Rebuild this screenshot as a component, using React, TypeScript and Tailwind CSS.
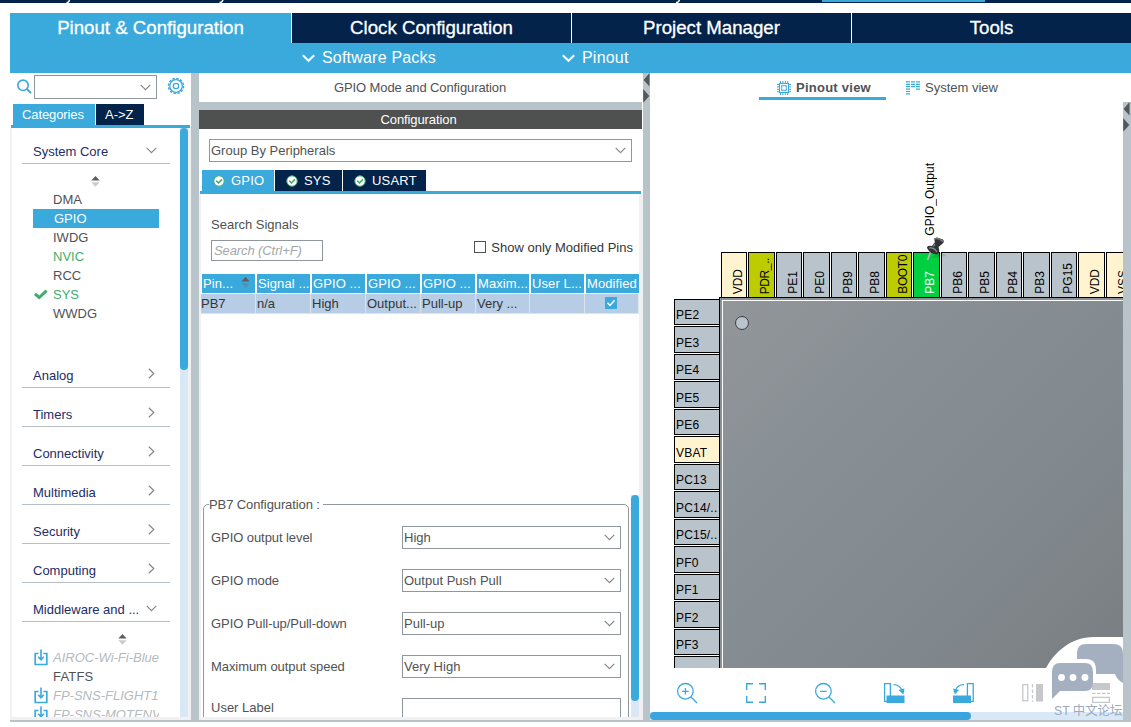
import type { ReactNode } from "react";
import clsx from "clsx";

const mainTabs = ["Clock Configuration", "Project Manager", "Tools"];

const coreItems = [
  { name: "DMA" },
  { name: "GPIO", selected: true },
  { name: "IWDG" },
  { name: "NVIC", green: true },
  { name: "RCC" },
  { name: "SYS", green: true, checked: true },
  { name: "WWDG" },
];

const closedGroups = ["Analog", "Timers", "Connectivity", "Multimedia", "Security", "Computing"];

const middleware = [
  { name: "AIROC-Wi-Fi-Blue", pack: true },
  { name: "FATFS", pack: false },
  { name: "FP-SNS-FLIGHT1", pack: true },
  { name: "FP-SNS-MOTENV", pack: true },
];

const columns = [
  { head: "Pin...", value: "PB7", sort: true },
  { head: "Signal ...", value: "n/a" },
  { head: "GPIO ...", value: "High" },
  { head: "GPIO ...", value: "Output..." },
  { head: "GPIO ...", value: "Pull-up" },
  { head: "Maxim...", value: "Very ..." },
  { head: "User L...", value: "" },
  { head: "Modified", value: "check" },
];

const settings = [
  { label: "GPIO output level", value: "High" },
  { label: "GPIO mode", value: "Output Push Pull" },
  { label: "GPIO Pull-up/Pull-down", value: "Pull-up" },
  { label: "Maximum output speed", value: "Very High" },
];

const topPins = [
  "VDD", "PDR_..", "PE1", "PE0", "PB9", "PB8", "BOOT0", "PB7",
  "PB6", "PB5", "PB4", "PB3", "PG15", "VDD", "VSS",
];

const leftPins = [
  "PE2", "PE3", "PE4", "PE5", "PE6", "VBAT", "PC13", "PC14/..",
  "PC15/..", "PF0", "PF1", "PF2", "PF3", "",
];

const pinColor = (name: string) => {
  if (name === "PB7") return "bg-[#00d040] text-white";
  if (["VDD", "VSS", "VBAT"].includes(name)) return "bg-[#fff4cf] text-black";
  if (name.startsWith("PDR") || name === "BOOT0") return "bg-[#bccc00] text-black";
  return "bg-[#b8c3cb] text-black";
};

function Chevron({ className }: { className?: string }) {
  return (
    <svg width="11" height="7" viewBox="0 0 11 7" fill="none" className={clsx("shrink-0", className)}>
      <path d="M0.7 0.8 L5.5 5.6 L10.3 0.8" stroke="#85888b" strokeWidth="1.2" />
    </svg>
  );
}

function SortArrows({ className, dim = "#c9cbcd" }: { className?: string; dim?: string }) {
  return (
    <svg width="9" height="11" viewBox="0 0 9 11" className={clsx("shrink-0", className)}>
      <path d="M4.5 0 L8.7 4.6 H0.3 Z" fill="#5c5f61" />
      <path d="M0.3 6.2 H8.7 L4.5 10.8 Z" fill={dim} />
    </svg>
  );
}

function PackIcon() {
  return (
    <svg width="14" height="17" viewBox="0 0 14 17" fill="none" stroke="#3aa9dc" className="shrink-0">
      <path d="M4.5 4.5 H1.2 V15.5 H12.8 V4.5 H9.5" strokeWidth="1.7" />
      <path d="M7 0.5 V10 M4.2 7.8 L7 10.8 L9.8 7.8" strokeWidth="1.6" />
    </svg>
  );
}

function GroupHeader({ label, open }: { label: string; open?: boolean }) {
  return (
    <div className="flex h-[39px] w-[148px] shrink-0 items-start justify-between border-b border-[#b4bfc6] pl-[11px] text-[#222d66]">
      <span className="mt-[18px] leading-[18px]">{label}</span>
      {open ? (
        <Chevron className="mr-[13px] mt-[22px]" />
      ) : (
        <svg width="7" height="11" viewBox="0 0 7 11" fill="none" className="mr-[15px] mt-[19px]">
          <path d="M0.8 0.7 L5.8 5.5 L0.8 10.3" stroke="#85888b" strokeWidth="1.2" />
        </svg>
      )}
    </div>
  );
}

function Select({ value, className }: { value: string; className?: string }) {
  return (
    <div className={clsx("flex h-[23px] items-center justify-between border border-[#8f969c] bg-white pl-px pr-[5px]", className)}>
      <span>{value}</span>
      <Chevron />
    </div>
  );
}

function PeripheralTab({ label, active, className }: { label: string; active?: boolean; className: string }) {
  return (
    <div className={clsx("flex h-[21px] items-center pl-[11px] tracking-[0.2px] text-white", active ? "bg-[#3aa9dc]" : "bg-[#03234b]", className)}>
      <svg width="12" height="12" viewBox="0 0 12 12" fill="none" className="mr-[6px]">
        <circle cx="6" cy="6" r="5.2" fill="#fff" stroke="#4cb073" strokeWidth="1" />
        <path d="M3.2 5.8 L5.4 8 L9 4.4" stroke="#3fa868" strokeWidth="1.5" />
      </svg>
      {label}
    </div>
  );
}

function Splitter({ className }: { className: string }) {
  return (
    <div className={clsx("shrink-0 bg-[#b9c3ca]", className)}>
      <svg width="8" height="30" viewBox="0 0 8 30">
        <path d="M6.5 0 V13.5 L0.6 7 Z M0.2 16 L6.3 23 L0.2 29.8 Z" fill="#55585a" />
      </svg>
    </div>
  );
}

function ToolIcon({ children, className }: { children: ReactNode; className?: string }) {
  return (
    <svg width="22" height="22" viewBox="0 0 22 22" fill="none" stroke="#3aa9dc" strokeWidth="1.3" className={clsx("shrink-0", className)}>
      {children}
    </svg>
  );
}

function Sidebar() {
  return (
    <aside className="flex w-[181px] shrink-0 flex-col">
      <div className="flex h-[31px] items-start">
        <svg width="16" height="16" viewBox="0 0 16 16" fill="none" stroke="#3aa9dc" strokeWidth="1.6" className="ml-[6px] mt-[5px]">
          <circle cx="7" cy="7.3" r="5.2" />
          <path d="M10.8 11 L15 15" strokeWidth="1.8" />
        </svg>
        <div className="ml-[2px] mt-[2px] flex h-[24px] w-[123px] items-center justify-end border border-[#8f969c] pr-[5px]">
          <Chevron />
        </div>
        <svg width="18" height="18" viewBox="0 0 18 18" fill="none" stroke="#3aa9dc" className="ml-[10px] mt-[4px]">
          <circle cx="9" cy="9" r="6.3" strokeWidth="1.3" />
          <circle cx="9" cy="9" r="7.5" strokeWidth="1.5" strokeDasharray="2.4 1.527" />
          <circle cx="9" cy="9" r="2.7" strokeWidth="1.3" />
        </svg>
      </div>
      <div className="ml-px flex h-[24px] w-[179px] gap-px border-b-[3px] border-[#3aa9dc] pl-[2px] text-white">
        <div className="w-[82px] bg-[#3aa9dc] pl-[9px] leading-[21px] tracking-[-0.1px]">Categories</div>
        <div className="w-[48px] bg-[#03234b] pl-[9px] leading-[21px]">A-&gt;Z</div>
      </div>
      <div className="flex h-[592px] border-b-[3px] border-l-2 border-r-[3px] border-[#f1f1f3]">
        <div className="flex w-[168px] flex-col overflow-hidden pl-[10px]">
          <div className="-mt-[3px]"><GroupHeader label="System Core" open /></div>
          <div className="flex h-[185px] w-[137px] shrink-0 flex-col pl-[11px]">
            <SortArrows className="mb-[3px] ml-[58px] mt-[12px]" />
            {coreItems.map((item) => (
              <div
                key={item.name}
                className={clsx(
                  "flex h-[19px] shrink-0 items-center pl-[20px]",
                  item.selected && "bg-[#3aa9dc] pl-[21px] text-white",
                  item.green && "text-[#3fae6c]",
                )}
              >
                {item.checked && (
                  <svg width="14" height="11" viewBox="0 0 14 11" fill="none" className="-ml-[19px] mr-[5px]">
                    <path d="M1 4.8 L5.2 8.5 L12.6 1.6" stroke="#3fae6c" strokeWidth="3" />
                  </svg>
                )}
                {item.name}
              </div>
            ))}
          </div>
          {closedGroups.map((g) => <GroupHeader key={g} label={g} />)}
          <GroupHeader label="Middleware and ..." open />
          <div className="flex w-[137px] flex-col pl-[11px]">
            <SortArrows className="mb-[3px] ml-[85px] mt-[12px]" />
            {middleware.map((m) => (
              <div
                key={m.name}
                className={clsx("flex h-[19px] shrink-0 items-center overflow-hidden whitespace-nowrap", m.pack ? "gap-[5px] pl-px italic text-[#b3bac0]" : "pl-[20px] tracking-[0.2px]")}
              >
                {m.pack && <PackIcon />}
                {m.name}
              </div>
            ))}
          </div>
        </div>
        <div className="w-[8px] bg-[#d9e8f6]">
          <div className="h-[242px] rounded-full bg-[#3aa9dc]" />
        </div>
      </div>
    </aside>
  );
}

function ConfigPanel() {
  return (
    <main className="flex w-[444px] shrink-0 flex-col">
      <div className="h-[29px] pr-[2px] text-center leading-[29px] tracking-[-0.1px]">GPIO Mode and Configuration</div>
      <div className="mr-px h-[8px] bg-[#b9c3ca]" />
      <div className="mr-px h-[19px] bg-[#4f5150] pr-[4px] text-center leading-[19px] tracking-[-0.1px] text-white">Configuration</div>
      <Select value="Group By Peripherals" className="ml-[10px] mt-[10px] w-[423px]" />
      <div className="ml-px mr-[2px] mt-[8px] flex gap-px border-b-[3px] border-[#3aa9dc] pl-[2px]">
        <PeripheralTab label="GPIO" active className="w-[72px]" />
        <PeripheralTab label="SYS" className="w-[67px]" />
        <PeripheralTab label="USART" className="w-[83px]" />
      </div>
      <div className="flex h-[526px] flex-col overflow-hidden border-b-[3px] border-l-2 border-r-4 border-[#f1f1f3]">
        <div className="ml-[10px] mt-[22px] leading-[18px]">Search Signals</div>
        <div className="flex h-[27px] items-start justify-between pl-[10px] pr-[6px] pt-[6px]">
          <div className="h-[21px] w-[112px] shrink-0 border border-[#8f969c] pl-[2px] italic leading-[19px] tracking-[-0.1px] text-[#a4a7a9]">Search (Ctrl+F)</div>
          <div className="flex gap-[5px] whitespace-nowrap text-[#333638]">
            <span className="mt-px h-[12px] w-[12px] border border-[#4f5254]" />
            <span className="leading-[15px]">Show only Modified Pins</span>
          </div>
        </div>
        <div className="mt-[13px] grid shrink-0 grid-cols-[55px_55px_55px_55px_55px_54px_55px_54px] whitespace-nowrap">
          {columns.map((c, i) => (
            <div key={i} className="flex items-center overflow-hidden">
              <div className={clsx("ml-px flex h-[19px] flex-1 items-center justify-between overflow-hidden bg-[#3aa9dc] pl-px text-white", i === 7 ? "mr-0" : "mr-px")}>
                <span className="tracking-[0.1px]">{c.head}</span>
                {c.sort && <SortArrows className="mb-[2px] mr-[5px]" dim="#558fae" />}
              </div>
            </div>
          ))}
          {columns.map((c, i) => (
            <div key={i} className={clsx("mt-px h-[20px] border-b border-r border-[#dfe3ea] bg-[#b7cde5] leading-[19px] text-[#333638]", i > 0 && "pl-px")}>
              {c.value === "check" ? (
                <svg width="12" height="12" viewBox="0 0 12 12" fill="none" className="ml-[19px] mt-[3px]">
                  <rect width="12" height="12" fill="#3aa9dc" />
                  <path d="M2.5 5.8 L5 8.5 L9.6 3.2" stroke="#fff" strokeWidth="1.5" />
                </svg>
              ) : c.value}
            </div>
          ))}
        </div>
        <div className="mt-[181px] flex min-h-0 flex-1 justify-between">
          <fieldset className="ml-[2px] h-[260px] w-[426px] rounded-[5px] border border-[#8f969c] px-[7px]">
            <legend className="-ml-[2px] mb-[12px] pr-[3px] leading-[19px] tracking-[-0.1px]">PB7 Configuration :</legend>
            {settings.map((s) => (
              <div key={s.label} className="mb-[20px] flex h-[23px] items-center">
                <span className="w-[191px] tracking-[-0.07px]">{s.label}</span>
                <Select value={s.value} className="w-[219px]" />
              </div>
            ))}
            <div className="flex h-[23px] items-center">
              <span className="-mt-[3px] w-[191px]">User Label</span>
              <div className="h-[23px] w-[219px] border border-[#8f969c]" />
            </div>
          </fieldset>
          <div className="w-[8px] bg-[#dce7f6]">
            <div className="h-[206px] rounded-full bg-[#3aa9dc]" />
          </div>
        </div>
      </div>
    </main>
  );
}

function Chip() {
  return (
    <div className="relative h-[566px] overflow-hidden pt-[150px] text-[12px]">
      <div className="ml-[71px] flex w-[440px] items-start">
        {topPins.map((p, i) => (
          <div key={i} className={clsx("shrink-0 pr-px", i % 2 ? "w-[28px]" : "w-[27px]")}>
            <div className={clsx("flex h-[46px] items-end border border-black pb-[3px]", pinColor(p))}>
              <span className={clsx("ml-[7px] w-[18px] shrink-0 rotate-180 whitespace-nowrap leading-[18px] [writing-mode:vertical-rl]", p.length > 4 && "tracking-[-0.4px]")}>{p}</span>
            </div>
          </div>
        ))}
      </div>
      <div className="flex">
        <div className="ml-[24px] mt-px w-[45px] shrink-0">
          {leftPins.map((p, i) => (
            <div key={i} className={clsx("pb-px", i % 2 ? "h-[28px]" : "h-[27px]")}>
              <div className={clsx("flex h-full items-end border border-r-0 border-black pl-px leading-[17px] tracking-[0.2px]", pinColor(p))}>{p}</div>
            </div>
          ))}
        </div>
        <div className="-mt-px h-[600px] w-[480px] shrink-0 border-l border-t border-black bg-[#8a9196] pl-[2px] pt-[2px]">
          <div className="h-full border-l border-t border-white bg-[linear-gradient(135deg,#929699_0px,#878f95_180px,#81888d_380px,#767a7c_600px)] pl-[12px] pt-[15px]">
            <div className="h-[14px] w-[14px] rounded-full border-[1.5px] border-[#3b3f42] bg-[#b8c3cb]" />
          </div>
        </div>
      </div>
      <span className="absolute left-[271px] top-[61px] rotate-180 whitespace-nowrap leading-[18px] [writing-mode:vertical-rl] text-black">GPIO_Output</span>
      <svg width="26" height="27" viewBox="0 0 26 27" className="absolute left-[275px] top-[134px]">
        <path d="M6 22 L22 20 L14 16 Z" fill="#000" opacity="0.12" />
        <path d="M6 15 L2.5 24" stroke="#b4b6b7" strokeWidth="1.8" />
        <path d="M2 12 Q2 9 7 10 L10 6 Q8 2 12 1.5 L18 3.5 Q20 6 17 8 L13.5 11 Q15.5 17 12 18.5 Q5 18 2 12 Z" fill="#303233" />
        <path d="M9 3 Q13 1 18.5 6" stroke="#75787a" strokeWidth="1.4" fill="none" />
        <path d="M4 12 Q9 11 12 16 M10 8 L8.5 10.5" stroke="#8d9092" strokeWidth="1.2" fill="none" />
      </svg>
    </div>
  );
}

function ViewToolbar() {
  return (
    <div className="flex h-[44px] items-start gap-[47px] pl-[26px] pt-[14px]">
      <ToolIcon>
        <circle cx="9.4" cy="9.3" r="7.8" />
        <path d="M15 15 L21 21 M9.4 6 V12.6 M6.1 9.3 H12.7" />
      </ToolIcon>
      <ToolIcon>
        <path d="M1.7 8 V1.7 H8 M14 1.7 H20.3 V8 M20.3 14 V20.3 H14 M8 20.3 H1.7 V14" strokeWidth="1.4" />
      </ToolIcon>
      <ToolIcon>
        <circle cx="9.4" cy="9.3" r="7.8" />
        <path d="M15 15 L21 21 M6.1 9.3 H12.7" />
      </ToolIcon>
      <ToolIcon>
        <path d="M1.6 1.6 H7.4 V19.4 H1.6 Z" />
        <rect x="3.5" y="13.5" width="18" height="7.5" fill="#3aa9dc" stroke="none" />
        <path d="M10.5 2.6 Q17 2.5 19 9" />
        <path d="M15.5 8 L21.5 6.5 L20.5 12.5 Z" fill="#3aa9dc" stroke="none" />
      </ToolIcon>
      <ToolIcon>
        <path d="M15.4 1.6 H21.2 V19.4 H15.4 Z" />
        <rect x="1" y="13.5" width="18" height="7.5" fill="#3aa9dc" stroke="none" />
        <path d="M12 2.6 Q5 2.5 3.6 9" />
        <path d="M1 6.5 L7 8 L2.8 12.5 Z" fill="#3aa9dc" stroke="none" />
      </ToolIcon>
      <ToolIcon>
        <rect x="1.8" y="2.7" width="5" height="16" stroke="#c6c8c9" />
        <path d="M11.5 2 V20" stroke="#c6c8c9" strokeDasharray="3.5 2" />
        <rect x="15" y="2" width="7" height="17.5" fill="#c6c8c9" stroke="none" />
      </ToolIcon>
      <ToolIcon>
        <rect x="2" y="1" width="18" height="7" fill="#c6c8c9" stroke="none" />
        <path d="M2 11.3 H20" stroke="#c6c8c9" strokeDasharray="3.5 1.5" />
        <rect x="2.7" y="15.4" width="16.6" height="5" stroke="#c6c8c9" />
      </ToolIcon>
    </div>
  );
}

function ForumBadge() {
  return (
    <div className="absolute bottom-0 right-0 w-[77px]">
      <svg width="77" height="66" viewBox="0 -7 77 66" className="block">
        <path d="M0 24 C8 9 24 -7 48 -7 H77 V24 Z" fill="#fff" />
        <path d="M40 0 H67 Q77 0 77 9 V39 Q71 36 69 30 H40 Q31 30 31 22 V9 Q31 0 40 0 Z" fill="#a4b0c0" />
        <path d="M11 15 H40 Q50 15 50 26 V30 H11 Z" fill="#fff" />
        <path d="M14 19 H39 Q47 19 47 28 V38 Q47 47 39 47 H14 L6 55 V28 Q6 19 14 19 Z" fill="#a4b0c0" />
        <circle cx="15.5" cy="33.5" r="3.4" fill="#fff" />
        <circle cx="27" cy="33.5" r="3.4" fill="#fff" />
        <circle cx="39" cy="33.5" r="3.4" fill="#fff" />
      </svg>
      <div className="flex h-[17px] items-center gap-[3px] whitespace-nowrap pl-[8px] text-[12.4px] text-[#9aaac0] [font-family:'Liberation_Sans','Noto_Sans_CJK_SC',sans-serif]">
        <span>ST</span>
        <span>中文论坛</span>
      </div>
    </div>
  );
}

function PinoutPanel() {
  return (
    <section className="relative flex w-[473px] shrink-0 flex-col">
      <div className="flex h-[29px] pl-[109px]">
        <div className="flex h-[27px] w-[127px] items-center border-b-[3px] border-[#3aa9dc] pl-[18px] pt-[5px] font-bold tracking-[0.25px]">
          <svg width="14" height="14" viewBox="0 0 14 14" fill="none" stroke="#3aa9dc" className="mr-[5px]">
            <path d="M3.5 0 V14 M5.9 0 V14 M8.3 0 V14 M10.7 0 V14 M0 3.5 H14 M0 5.9 H14 M0 8.3 H14 M0 10.7 H14" />
            <rect x="2.5" y="2.5" width="9" height="9" fill="#fff" />
            <rect x="4.7" y="4.7" width="4.6" height="4.6" />
          </svg>
          Pinout view
        </div>
        <div className="ml-[20px] flex h-[27px] items-center pt-[2px]">
          <svg width="14" height="14" viewBox="0 0 14 14" stroke="#3aa9dc" strokeWidth="1.2" className="mr-[5px]">
            <path d="M0 .9 H4 M5 .9 H9 M10 .9 H14 M0 3.3 H4 M5 3.3 H9 M10 3.3 H14 M0 5.7 H4 M5 5.7 H9 M10 5.7 H14 M0 8.1 H4 M10 8.1 H14 M0 10.5 H4 M0 12.9 H4" />
          </svg>
          System view
        </div>
      </div>
      <Chip />
      <ViewToolbar />
      <div className="h-[8px] bg-[#d9e8f6]">
        <div className="h-[8px] w-[321px] rounded-full bg-[#3aa5df]" />
      </div>
      <ForumBadge />
    </section>
  );
}

export default function App() {
  return (
    <div className="h-[727px] w-[1131px] overflow-hidden bg-white text-[13px] text-[#4f5254] [font-family:'Liberation_Sans',Arial,sans-serif]">
      {/* bottom edge of the window's breadcrumb bar */}
      <svg width="1131" height="3" viewBox="0 0 1131 3" className="block">
        <rect width="1131" height="3" fill="#03234b" />
        <rect x="822" width="163" height="2" fill="#3aa9dc" />
        <path d="M66.5 2.6 Q69 2.6 69.5 0 M219.5 2.6 Q222 2.6 223 0 M676 2.6 Q678.5 2.6 679.5 0" stroke="#fff" strokeWidth="1.5" fill="none" />
      </svg>
      <header className="ml-[10px] mt-[10px] h-[60px] bg-[#3aa9dc] text-white">
        <div className="flex h-[30px] gap-px text-center text-[18.67px] leading-[30px] [-webkit-text-stroke:0.3px_white]">
          <div className="w-[281px]">Pinout &amp; Configuration</div>
          <div className="-ml-px flex flex-1 gap-px bg-white pl-px">
            {mainTabs.map((t) => (
              <div key={t} className="flex-1 bg-[#03234b]">{t}</div>
            ))}
          </div>
        </div>
        <div className="flex h-[30px] items-center pl-[292px] text-[16px] tracking-[0.2px]">
          {["Software Packs", "Pinout"].map((t) => (
            <div key={t} className="flex w-[260px] items-center gap-[7px]">
              <svg width="13" height="9" viewBox="0 0 13 9" fill="none">
                <path d="M0.8 1.2 L6.5 6.8 L12.2 1.2" stroke="#fff" strokeWidth="2" />
              </svg>
              {t}
            </div>
          ))}
        </div>
      </header>
      <div className="ml-[10px] flex h-[649px] border-b-2 border-[#b9c3ca]">
        <Sidebar />
        <div className="w-[8px] shrink-0 bg-[#b9c3ca]" />
        <ConfigPanel />
        <Splitter className="w-[7px]" />
        <PinoutPanel />
        <Splitter className="mt-[29px] w-[8px]" />
      </div>
    </div>
  );
}
